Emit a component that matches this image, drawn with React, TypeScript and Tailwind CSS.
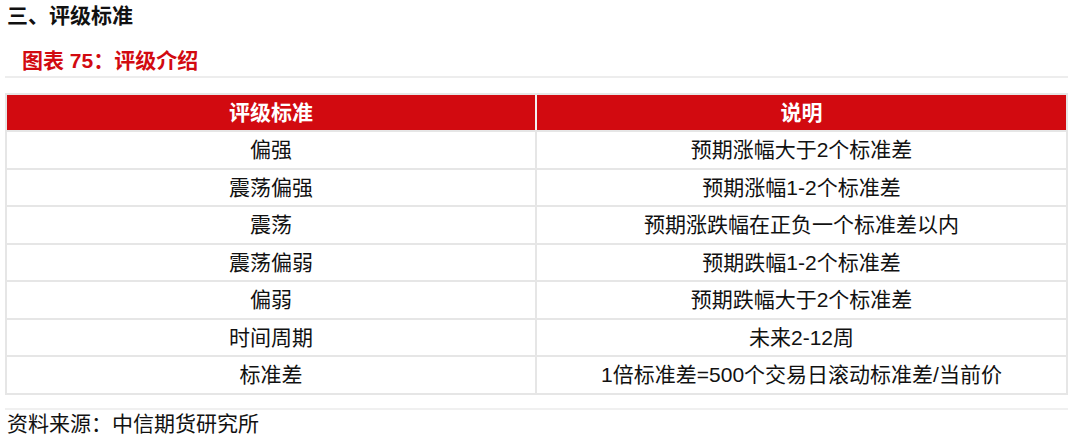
const rows: [string, string][] = [
  ["偏强", "预期涨幅大于2个标准差"],
  ["震荡偏强", "预期涨幅1-2个标准差"],
  ["震荡", "预期涨跌幅在正负一个标准差以内"],
  ["震荡偏弱", "预期跌幅1-2个标准差"],
  ["偏弱", "预期跌幅大于2个标准差"],
  ["时间周期", "未来2-12周"],
  ["标准差", "1倍标准差=500个交易日滚动标准差/当前价"],
];

export default function App() {
  return (
    <div
      className="w-[1073px] h-[437px] bg-white text-[#111] overflow-hidden"
      style={{ fontFamily: '"Liberation Sans", "Noto Sans CJK SC", sans-serif' }}
    >
      <div className="h-[32px] pl-[7px] text-[21px] leading-[32px] font-bold">三、评级标准</div>
      <div className="mt-[14px] h-[30px] pl-[22px] text-[21px] leading-[30px] font-bold text-[#d20a10]">
        图表 75：评级介绍
      </div>
      <div className="mx-[5px] h-[1.5px] bg-[#ededed]" />

      <div className="mt-[15px] ml-[5px] w-[1063px] border-2 border-[#e6e6e6]">
        <div className="grid grid-cols-[528px_1fr] h-[37.5px] border-b-2 border-[#e6e6e6] bg-[#d20a10] text-white font-bold text-[21px]">
          <div className="flex items-center justify-center">评级标准</div>
          <div className="flex items-center justify-center border-l-2 border-[#f2f2f2]">说明</div>
        </div>
        {rows.map(([a, b], i) => (
          <div
            key={a}
            className={
              i < rows.length - 1
                ? "grid grid-cols-[528px_1fr] h-[37.5px] border-b-2 border-[#e6e6e6] text-[21px]"
                : "grid grid-cols-[528px_1fr] h-[35.5px] text-[21px]"
            }
          >
            <div className="flex items-center justify-center">{a}</div>
            <div className="flex items-center justify-center border-l-2 border-[#e6e6e6]">{b}</div>
          </div>
        ))}
      </div>

      <div className="mt-[13px] mx-[5px] h-[2px] bg-[#f0f0f0]" />
      <div className="h-[28px] pl-[7px] text-[21px] leading-[28px]">资料来源：中信期货研究所</div>
    </div>
  );
}
